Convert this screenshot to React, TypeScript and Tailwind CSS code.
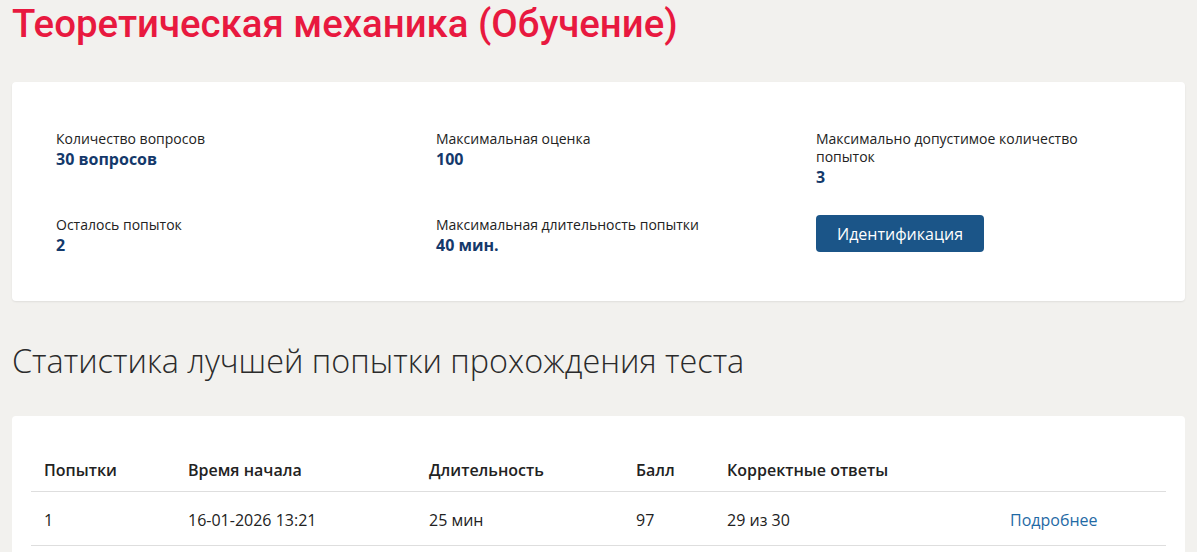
export default function App() {
  const info = [
    { label: "Количество вопросов", value: "30 вопросов" },
    { label: "Максимальная оценка", value: "100" },
    { label: "Максимально допустимое количество попыток", value: "3" },
    { label: "Осталось попыток", value: "2" },
    { label: "Максимальная длительность попытки", value: "40 мин." },
  ];

  return (
    <div className="min-h-screen bg-[#f2f1ee] px-3 font-['Open_Sans',sans-serif] text-[#222]">
      <h1 className="pt-[2px] font-['Roboto',sans-serif] text-[38.4px] font-medium leading-[44px] text-[#e8193f]">
        Теоретическая механика (Обучение)
      </h1>

      {/* test info */}
      <div className="mt-[36px] rounded bg-white pt-[48px] pb-[45px] pl-[44px] shadow-[0_1px_2px_rgba(0,0,0,0.08)]">
        <div className="grid grid-cols-[380px_380px_300px] gap-y-[28px]">
          {info.slice(0, 3).map((it) => (
            <div key={it.label}>
              <div className="text-sm leading-[18px]">{it.label}</div>
              <div className="text-base font-bold leading-[22px] text-[#14396b]">{it.value}</div>
            </div>
          ))}
          {info.slice(3).map((it) => (
            <div key={it.label}>
              <div className="text-sm leading-[18px]">{it.label}</div>
              <div className="text-base font-bold leading-[22px] text-[#14396b]">{it.value}</div>
            </div>
          ))}
          <div className="-mt-[1px]">
            <button className="h-[37px] rounded bg-[#1b5588] px-[21px] text-base text-white">
              Идентификация
            </button>
          </div>
        </div>
      </div>

      <h2 className="mt-[37px] text-[32.4px] font-light leading-[44px] text-[#2b2b2b]">
        Статистика лучшей попытки прохождения теста
      </h2>

      {/* best attempt */}
      <div className="mt-[34px] rounded-t bg-white px-[19px] pt-[42px] pb-4">
        <table className="w-full border-collapse text-left text-base">
          <thead>
            <tr className="border-b border-[#dedede]">
              <th className="w-[157px] pl-[13px] pb-[9px] font-semibold">Попытки</th>
              <th className="w-[241px] pb-[9px] font-semibold">Время начала</th>
              <th className="w-[207px] pb-[9px] font-semibold">Длительность</th>
              <th className="w-[91px] pb-[9px] font-semibold">Балл</th>
              <th className="w-[283px] pb-[9px] font-semibold">Корректные ответы</th>
              <th className="pb-[9px]"></th>
            </tr>
          </thead>
          <tbody>
            <tr className="border-b border-[#dedede]">
              <td className="pl-[13px] pt-[16px] pb-[13px]">1</td>
              <td className="pt-[16px] pb-[13px]">16-01-2026 13:21</td>
              <td className="pt-[16px] pb-[13px]">25 мин</td>
              <td className="pt-[16px] pb-[13px]">97</td>
              <td className="pt-[16px] pb-[13px]">29 из 30</td>
              <td className="pt-[16px] pb-[13px]">
                <a href="#" className="text-[#1f6aa5]">Подробнее</a>
              </td>
            </tr>
          </tbody>
        </table>
      </div>
    </div>
  );
}
